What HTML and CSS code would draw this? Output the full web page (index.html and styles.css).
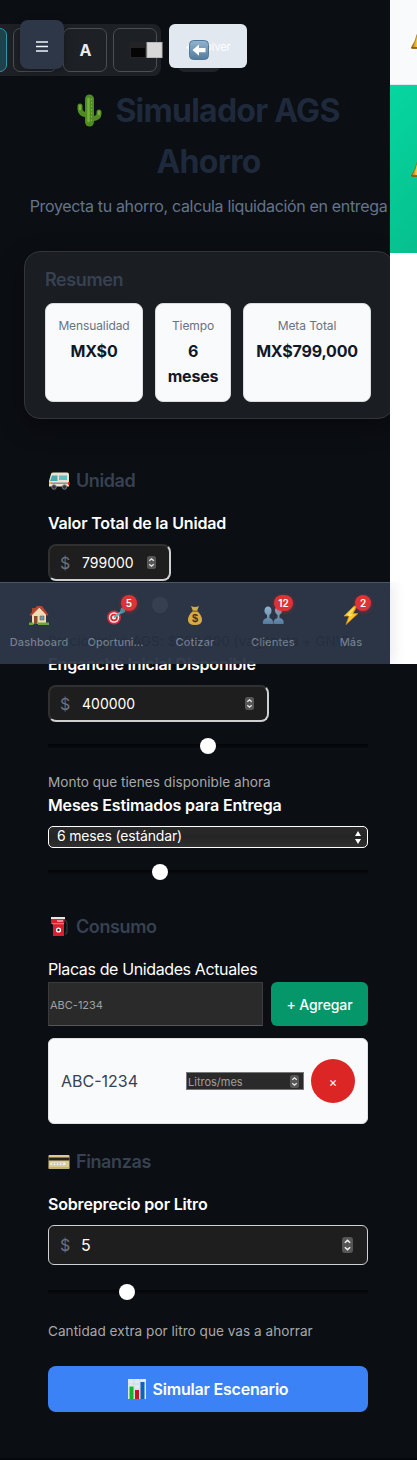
FILE: index.html
```html
<!DOCTYPE html>
<html lang="es">
<head>
<meta charset="utf-8">
<title>Simulador AGS Ahorro</title>
<link rel="stylesheet" href="styles.css">
</head>
<body>
<svg class="defs" width="0" height="0">
  <defs>
    <linearGradient id="gold" x1="0" x2="1"><stop offset="0" stop-color="#a8690c"/><stop offset=".3" stop-color="#ffd54a"/><stop offset=".5" stop-color="#ffe88a"/><stop offset="1" stop-color="#b9780f"/></linearGradient>
    <linearGradient id="blue" x1="0" y1="0" x2="0" y2="1"><stop offset="0" stop-color="#91b4d0"/><stop offset="1" stop-color="#547a9c"/></linearGradient>
    <symbol id="bell" viewBox="0 0 20 20"><path d="M10 1c4 0 5 4 5.500 8 .3 3 2.500 4 4 8H.5c.5-3 3-5 4-8C5.500 5 6 1 10 1z" fill="url(#gold)" stroke="#8a570a" stroke-width=".7"/><path d="M.5 17h19" stroke="#8a570a" stroke-width="1.500"/><circle cx="10" cy="18" r="1.800" fill="#8a570a"/></symbol>
    <symbol id="spin" viewBox="0 0 9 13"><rect width="9" height="13" rx="2.500" fill="#565656"/><path d="M2.300 4.700 4.500 2.700 6.700 4.700M2.300 8.300 4.500 10.300 6.700 8.300" fill="none" stroke="#eee" stroke-width="1.200"/></symbol>
  </defs>
</svg>
<div class="page">
  <main class="main">
    <div class="toolbar">
      <span class="tool tool-active"></span><span class="tool"></span><span class="tool letter">A</span>
      <span class="tool contrast"><svg width="33" height="16" viewBox="0 0 33 16"><rect x=".5" y=".5" width="15" height="15" fill="#050505" stroke="#252525"/><rect x="1" y="1" width="14" height="5" fill="#232323"/><rect x="17" y=".5" width="15" height="15" fill="#d8d8d8" stroke="#b8b8b8"/></svg></span>
    </div>
    <header class="header">
      <h1><svg class="cactus" width="25" height="33" viewBox="0 0 25 33"><g fill="none" stroke="#4f8a23" stroke-linecap="round" stroke-linejoin="round"><path d="M3 12v3q0 5 7 6M22 18v2q0 4-7 5" stroke-width="5"/><path d="M12.500 5v23" stroke-width="9"/></g><g fill="none" stroke="#74b33a" stroke-linecap="round"><path d="M11.500 5v22M3 12v3M22 18v2" stroke-width="2.500"/><path d="M14.500 5v23" stroke="#a4c65e" stroke-width=".8" stroke-dasharray=".5 3"/></g></svg><span>Simulador AGS</span><br><span>Ahorro</span></h1>
      <p>Proyecta tu ahorro, calcula liquidación en entrega</p>
    </header>
    <section class="summary">
      <h2>Resumen</h2>
      <div class="tiles">
        <div class="tile tile-a"><small>Mensualidad</small><b>MX$0</b></div>
        <div class="tile tile-b"><small>Tiempo</small><b>6<br>meses</b></div>
        <div class="tile tile-c"><small>Meta Total</small><b>MX$799,000</b></div>
      </div>
    </section>

    <form class="form">
      <h2><svg width="22" height="18" viewBox="0 0 22 18"><path d="M3 2Q3 .5 5 .5h14q2 0 2 2v12H1V9z" fill="#e8e2cf"/><path d="M4 3.500h5.500V9H2z" fill="#4aa9ad"/><path d="M11 3.500h8V8h-8z" fill="#63bfc2"/><path d="M1 10.500h20v1.500H1z" fill="#8d8fa8"/><path d="M20 10h1.500v3H20z" fill="#e23b2e"/><path d="M1 10h2v2H1z" fill="#f2b632"/><g fill="#33363c" stroke="#888" stroke-width=".8"><circle cx="6" cy="15" r="2.300"/><circle cx="16.500" cy="15" r="2.300"/></g></svg>Unidad</h2>
      <label class="lbl">Valor Total de la Unidad</label>
      <div class="field field-short"><i>$</i><span>799000</span><svg width="9" height="13"><use href="#spin"/></svg></div>
      <div class="slider"><u style="margin-left:32.500%"></u></div>
      <p class="hint hint-faint">Precio típico AGS: $799,000 (vagoneta + GNV)</p>
      <label class="lbl">Enganche Inicial Disponible</label>
      <div class="field field-mid"><i>$</i><span>400000</span><svg width="9" height="13"><use href="#spin"/></svg></div>
      <div class="slider"><u style="margin-left:47.500%"></u></div>
      <p class="hint">Monto que tienes disponible ahora</p>
      <label class="lbl">Meses Estimados para Entrega</label>
      <div class="select"><span>6 meses (estándar)</span><svg width="8" height="13" viewBox="0 0 8 13"><path d="M4 0 7 5H1zM4 13 7 8H1z" fill="#fff"/></svg></div>
      <div class="slider"><u style="margin-left:32.500%"></u></div>

      <h2 class="h-consumo"><svg width="22" height="22" viewBox="0 0 22 22"><path d="M3 2h14l-1 6v12H5V8H3z" fill="#d91f2b"/><path d="M3 1h14v2H3z" fill="#e7e7e7"/><path d="M4 7h12v1.300H4z" fill="#ff6b6b"/><path d="M9 4.500h6v1h-6z" fill="#fff"/><circle cx="10.500" cy="14" r="2.600" fill="#fff"/><circle cx="10.500" cy="14" r="1.200" fill="#222"/><path d="M17 4q2 1 2 5v6q0 3-2 3" fill="none" stroke="#30343a" stroke-width="1.300"/></svg>Consumo</h2>
      <label class="lbl lbl-normal">Placas de Unidades Actuales</label>
      <div class="add-row"><div class="plate-input">ABC-1234</div><div class="add">+ Agregar</div></div>
      <div class="plate"><span class="plate-id">ABC-1234</span><div class="liters"><span>Litros/mes</span><svg width="9" height="13"><use href="#spin"/></svg></div><div class="remove">×</div></div>

      <h2 class="h-fin"><svg width="22" height="16" viewBox="0 0 22 16"><rect x=".5" y="1" width="21" height="14" rx="1" fill="#d9cc91"/><path d="M.5 3.500h21v3H.5z" fill="#2b2416"/><path d="M2.500 8.500h15v2.500h-15z" fill="#eeeeea"/><path d="M4 9.800h12" stroke="#8fa2c0" stroke-width=".8" stroke-dasharray="2 1"/><path d="M.5 14h21" stroke="#a99a5c"/></svg>Finanzas</h2>
      <label class="lbl">Sobreprecio por Litro</label>
      <div class="field field-full"><i>$</i><span>5</span><svg width="11" height="16" viewBox="0 0 9 13"><use href="#spin"/></svg></div>
      <div class="slider slider-last"><u style="margin-left:22.200%"></u></div>
      <p class="hint">Cantidad extra por litro que vas a ahorrar</p>
      <div class="submit"><svg width="18" height="20" viewBox="0 0 18 20"><rect width="18" height="20" fill="#dfe9ef"/><path d="M0 5h18M0 10h18M0 15h18M6 0v20M12 0v20" stroke="#c0ccd4" stroke-width=".5"/><path d="M1.500 7.500h4V20h-4z" fill="#13b52b"/><path d="M7 11h4v9H7z" fill="#c81420"/><path d="M12.500 3h4v17h-4z" fill="#0d62bd"/></svg><span>Simular Escenario</span></div>
    </form>
  </main>

  <div class="back">← Volver</div>
  <div class="back-ghost"><svg width="20" height="20" viewBox="0 0 20 20"><rect x=".5" y=".5" width="19" height="19" rx="4" fill="url(#blue)" stroke="#537896"/><path d="M3.500 10 10 4.500V8h6.500v4.300H10v3.500z" fill="#fff"/></svg></div>
  <div class="menu"><svg width="12" height="11" viewBox="0 0 12 11"><path d="M0 1h12M0 5.500h12M0 10h12" stroke="#f1f5f9" stroke-width="1.400"/></svg></div>

  <aside class="aside">
    <div class="aside-top"><svg width="20" height="20"><use href="#bell"/></svg></div>
    <div class="aside-green"><svg width="20" height="20"><use href="#bell"/></svg></div>
  </aside>

  <nav class="nav">
    <div class="item"><svg width="20" height="20" viewBox="0 0 20 20"><path d="M3 3h3v5H3z" fill="#a5482f"/><path d="M3 9 10 2l7 7v10H3z" fill="#f0dcb4"/><path d="M.5 10 8 1h5l6.500 9-1.500.7L10.500 2.500 2 11z" fill="#b4472f"/><path d="M5 11h3.500v8H5z" fill="#8b4c2e"/><path d="M11 11h4v4h-4z" fill="#5c9ac0" stroke="#8b5a3c" stroke-width=".6"/><path d="M0 17.500h4.500V20H0zM9 17.500h11V20H9z" fill="#68a63a"/></svg><span>Dashboard</span></div>
    <div class="item"><svg width="20" height="20" viewBox="0 0 20 20"><circle cx="7" cy="12.500" r="7" fill="#d52b36"/><circle cx="7" cy="12.500" r="5.200" fill="#f4eeee"/><circle cx="7" cy="12.500" r="3.800" fill="#d52b36"/><circle cx="7" cy="12.500" r="2" fill="#fff"/><path d="m7 12.500 9-7" stroke="#4cb8c4" stroke-width="2"/><path d="m13 7 1-4 5-2-1 6-4 2z" fill="#3e9cab"/></svg><em class="badge">5</em><span class="tight">Oportuni...</span></div>
    <div class="item"><svg width="20" height="20" viewBox="0 0 20 20"><path d="M6 1q4 2 8 0l-2 5q5 4 5 9 0 5-7 5t-7-5q0-5 5-9z" fill="#d6aa45"/><path d="M7 6.200h6" stroke="#8b6422" stroke-width="1.300"/><text x="10" y="17" text-anchor="middle" class="coin">$</text></svg><span>Cotizar</span></div>
    <div class="item"><svg width="22" height="18" viewBox="0 0 22 18"><g fill="url(#blue)"><path d="M1 18q-1-5 4-6V9Q2 7 2.500 4 3 .5 6 .5T9.500 4Q10 7 7.500 9v3q4 1 3.500 6z"/><path d="M11.500 18q-.5-5 4-6V9Q12.500 7 13 4q.5-3.500 3.500-3.500T20 4q.5 3-2.500 5v3q5 1 4 6z"/></g></svg><em class="badge wide">12</em><span>Clientes</span></div>
    <div class="item"><svg width="18" height="20" viewBox="0 0 18 20"><path d="M12 1 2 11h5L4 19.500 16 8.500h-5L15 1z" fill="#ffc928" stroke="#d58a12" stroke-width=".8"/><path d="M12 3 6 10h4" fill="none" stroke="#fff0a0"/></svg><em class="badge">2</em><span>Más</span></div>
  </nav>
</div>
</body>
</html>
```

FILE: styles.css
```css
* { box-sizing: border-box; }
body { margin: 0; background: #0b0e13; font-family: Inter, "Open Sans", sans-serif; color: #fff; }
h1, h2, p { margin: 0; }
svg { display: block; flex: none; }
.defs { position: absolute; }
.page { position: relative; width: 417px; height: 1460px; overflow: hidden; background: #0b0e13; border-bottom: 2px solid #06080b; }
.main { padding-top: 24px; }

.toolbar { display: flex; gap: 6px; width: 205px; height: 52px; margin-left: -44px; padding: 4px 4px 4px 7px; border-radius: 8px; background: #1d2024; }
.tool { display: flex; align-items: center; justify-content: center; flex: none; width: 44px; height: 44px; border: 1px solid #4b4e52; border-radius: 7px; background: #1d2125; font-size: 16px; font-weight: 700; color: #e9edf2; }
.tool-active { border-color: #2796a8; background: #1d424c; }
.letter { padding-left: 1px; }
.contrast svg { margin-left: 23px; }

.header { margin-top: 9px; text-align: center; }
h1 { font-size: 32px; font-weight: 700; line-height: 51px; color: #1e293b; white-space: nowrap; letter-spacing: -.75px; }
.cactus { display: inline-block; margin-right: 13px; vertical-align: -5px; }
.header p { margin-top: 6px; font-size: 16px; line-height: 26px; color: #64748b; white-space: nowrap; letter-spacing: -.34px; }

.summary { width: 370px; height: 168px; margin: 32px 0 0 24px; padding: 14px 20px 16px; border: 1px solid #323539; border-radius: 16px; background: #1a1d21; box-shadow: 0 8px 24px rgba(0,0,0,.4); }
h2 { display: flex; align-items: center; gap: 6px; height: 29px; font-size: 18px; font-weight: 600; line-height: 29px; color: #374151; letter-spacing: -.4px; }
.summary h2 { height: 27px; }
.tiles { display: flex; gap: 12px; margin-top: 10px; }
.tile { height: 99px; padding: 12px 0; border: 1px solid #d9dbdf; border-radius: 8px; background: #f8fafc; text-align: center; color: #111827; white-space: nowrap; }
.tile-a { width: 98px; }
.tile-b { width: 76px; }
.tile-c { width: 128px; }
.tile small { display: block; font-size: 12px; line-height: 19px; color: #6b7280; letter-spacing: -.1px; }
.tile b { display: block; margin-top: 4px; font-size: 16px; line-height: 25px; font-weight: 700; letter-spacing: -.2px; }

.form { width: 320px; margin: 47px 0 0 48px; }
.lbl { display: block; height: 26px; margin-top: 15px; font-size: 16px; font-weight: 600; line-height: 26px; white-space: nowrap; letter-spacing: -.17px; }
.hint + .lbl { margin-top: -1px; }
.lbl-normal { font-weight: 400; letter-spacing: -.38px; }
.field { display: flex; align-items: center; height: 37px; margin-top: 8px; padding: 0 13px 0 10px; border: 2px solid #303030; border-right-color: #cfcfcf; border-bottom-color: #cfcfcf; border-radius: 8px; background: #1e1e1e; font-size: 14px; }
.field i { width: 22px; font-style: normal; font-size: 16px; color: #6b7280; }
.field span { flex: 1; }
.field-short { width: 123px; }
.field-mid { width: 221px; }
.field-full { height: 40px; padding: 0 14px 0 11px; border: 1px solid #cfd1d5; border-radius: 6px; font-size: 16px; }
.field-full i { width: 21px; }
.slider { height: 16px; margin-top: 16px; background: linear-gradient(#030507, #090b0f) 0 6px / 100% 4px no-repeat; }
.slider u { display: block; width: 16px; height: 16px; border-radius: 50%; background: #fff; }
.slider-last { margin-top: 19px; }
.hint { height: 22px; margin-top: 17px; font-size: 13.600px; line-height: 22px; color: #a7a8aa; white-space: nowrap; letter-spacing: .02px; }
.hint-faint { position: relative; z-index: 3; color: rgba(10,18,28,.2); }
.slider-last + .hint { margin-top: 20px; }
.select { display: flex; align-items: center; justify-content: space-between; height: 22px; margin-top: 8px; padding: 0 5px 0 8px; border: 1px solid #fff; border-radius: 5px; background: linear-gradient(#2b2b2b, #242424 50%, #303030); font-size: 14px; line-height: 18px; letter-spacing: -.17px; }
.select span { padding-bottom: 2px; }
.h-consumo { margin-top: 32px; }
.h-fin { margin-top: 23px; }
.add-row { display: flex; gap: 8px; height: 44px; }
.plate-input { width: 215px; padding-left: 1px; border: 1px solid #3b3b3b; border-bottom-color: #555; background: #2a2a2a; font-size: 11px; line-height: 44px; color: #a0a0a0; }
.add { width: 97px; border-radius: 6px; background: #059669; font-size: 14px; font-weight: 500; line-height: 46px; text-align: center; letter-spacing: -.1px; }
.plate { display: flex; align-items: center; height: 86px; margin-top: 12px; padding: 0 12px; border: 1px solid #dfe1e5; border-radius: 6px; background: #f8fafc; }
.plate-id { flex: 1; font-size: 16px; color: #374151; }
.liters { display: flex; align-items: center; justify-content: space-between; width: 118px; height: 18px; padding: 0 4px 0 1px; border: 1px solid #777; background: #2a2a2a; font-size: 11px; color: #a0a0a0; }
.liters span { padding-top: 1px; }
.remove { width: 44px; height: 44px; margin-left: 7px; border-radius: 50%; background: #dc2626; font-size: 13px; line-height: 46px; text-align: center; }
.submit { display: flex; align-items: center; justify-content: center; gap: 7px; height: 46px; margin-top: 24px; border-radius: 8px; background: #3b82f6; font-size: 16px; font-weight: 600; letter-spacing: -.2px; white-space: nowrap; }

.back { position: absolute; left: 169px; top: 24px; width: 78px; height: 44px; padding-left: 16px; border-radius: 6px; background: #e2e8f0; font-size: 11px; line-height: 47px; color: #fff; white-space: nowrap; letter-spacing: -.1px; }
.back-ghost { position: absolute; left: 177px; top: 28px; width: 44px; height: 44px; padding: 12px; border-radius: 8px; background: rgba(226,232,245,.1); }
.menu { position: absolute; left: 20px; top: 20px; display: flex; align-items: center; justify-content: center; width: 44px; height: 49px; padding-top: 3px; border-radius: 8px; background: #2d3748; box-shadow: 0 2px 8px rgba(0,0,0,.3); }

.aside { position: absolute; left: 390px; top: 0; width: 27px; height: 664px; overflow: hidden; background: #fff; }
.aside-top { height: 85px; padding: 31px 0 0 21px; border-bottom: 1px solid #e2e8f0; background: #f9fafc; }
.aside-green { height: 168px; padding: 74px 0 0 21px; background: linear-gradient(135deg, #06d6a0, #06c08e); }

.nav { position: absolute; z-index: 2; left: 0; top: 582px; display: flex; width: 390px; height: 82px; border-top: 1px solid #4a5568; background: rgba(45,55,72,.96); box-shadow: 0 0 16px rgba(0,0,0,.12); clip-path: inset(0 -27px 0 0); }
.item { position: relative; display: flex; flex-direction: column; align-items: center; width: 78px; padding-top: 22px; }
.item svg { height: 20px; }
.item span { margin-top: 9px; font-size: 11px; line-height: 16px; font-weight: 500; color: #758092; letter-spacing: .15px; }
.item .tight { margin-left: -3px; letter-spacing: 0; }
.coin { font: bold 11px "Liberation Sans", sans-serif; fill: #3d351d; }
.badge { position: absolute; left: 43px; top: 12px; min-width: 16px; height: 16px; border-radius: 8px; background: #dc3336; font-size: 10px; font-style: normal; font-weight: 600; line-height: 16px; text-align: center; box-shadow: 0 1px 4px rgba(220,40,40,.5); }
.badge.wide { left: 40px; width: 19px; }
```
